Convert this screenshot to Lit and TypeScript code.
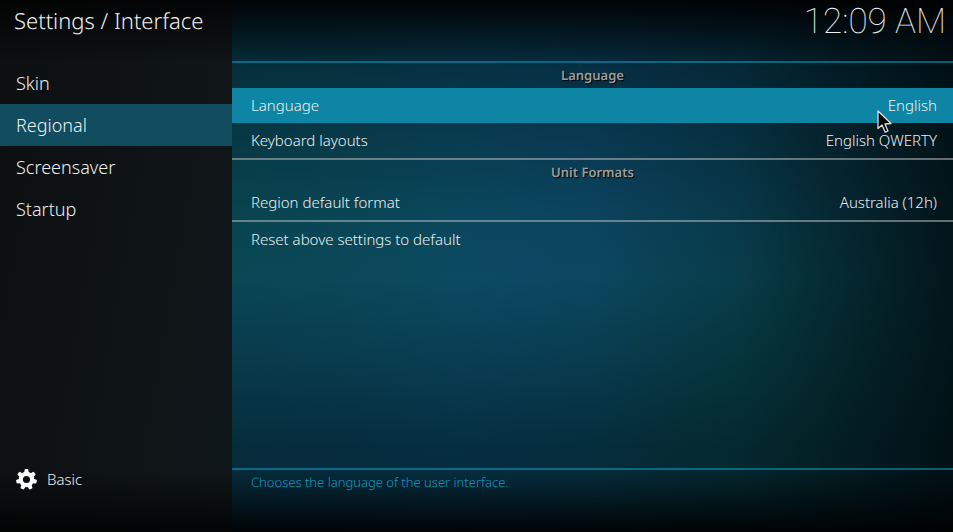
import { LitElement, html, svg, css, nothing } from "lit";
import { customElement, property, state } from "lit/decorators.js";
import { classMap } from "lit/directives/class-map.js";

interface Setting {
  label: string;
  value?: string;
}

interface Group {
  title?: string;
  settings: Setting[];
}

const CATEGORIES = ["Skin", "Regional", "Screensaver", "Startup"];

const GROUPS: Group[] = [
  {
    title: "Language",
    settings: [
      { label: "Language", value: "English" },
      { label: "Keyboard layouts", value: "English QWERTY" },
    ],
  },
  {
    title: "Unit Formats",
    settings: [{ label: "Region default format", value: "Australia (12h)" }],
  },
  { settings: [{ label: "Reset above settings to default" }] },
];

const GEAR_TEETH = 7;

@customElement("settings-sidebar")
export class SettingsSidebar extends LitElement {
  @state() private current = "Regional";

  static styles = css`
    :host {
      display: flex;
      flex-direction: column;
      background:
        linear-gradient(#000000d0, #00000000) top / 100% 62px no-repeat,
        linear-gradient(#00000000, #000000d0) bottom / 100% 62px no-repeat,
        linear-gradient(100deg, #0d0f10, #10171a);
    }
    .title {
      margin: 0;
      height: 62px;
      padding-left: 14px;
      font-size: 22px;
      font-weight: 300;
      line-height: 42px;
      white-space: nowrap;
      box-sizing: border-box;
    }
    .menu {
      display: flex;
      flex-direction: column;
    }
    .item,
    .level {
      border: 0;
      background: none;
      color: inherit;
      font: inherit;
      text-align: left;
      padding: 0 16px;
    }
    .item {
      height: 42px;
      font-size: 18px;
    }
    .current {
      background: #114d5e;
    }
    .level {
      display: flex;
      align-items: center;
      gap: 10px;
      height: 40px;
      margin-top: auto;
      margin-bottom: 33px;
      font-size: 15px;
    }
    .gear {
      width: 21px;
      height: 21px;
      fill: none;
      stroke: #fff;
    }
  `;

  render() {
    return html`
      <h1 class="title">Settings / Interface</h1>
      <nav class="menu" aria-label="Categories">
        ${CATEGORIES.map(
          (name) => html`<button
            class=${classMap({ item: true, current: name === this.current })}
            @click=${() => (this.current = name)}
          >
            ${name}
          </button>`,
        )}
      </nav>
      <button class="level">
        <svg class="gear" viewBox="-10 -10 20 20" aria-hidden="true">
          <circle r="5.4" stroke-width="4" />
          ${Array.from(
            { length: GEAR_TEETH },
            (_, i) => svg`<path
              d="M-1.3 -6.8L-1 -9.1H1L1.3 -6.8Z"
              stroke-width="1.6"
              stroke-linejoin="round"
              fill="#fff"
              transform="rotate(${(i * 360) / GEAR_TEETH})"
            />`,
          )}
        </svg>
        Basic
      </button>
    `;
  }
}

@customElement("settings-group")
export class SettingsGroup extends LitElement {
  @property({ attribute: false }) group: Group = { settings: [] };
  @property() focused = "";

  static styles = css`
    :host {
      display: block;
    }
    .heading {
      margin: 0;
      font-size: 13px;
      font-weight: 600;
      line-height: 25px;
      text-align: center;
      color: #a09c9a;
      text-shadow: 1px 1px 1px #000;
    }
    .row {
      display: flex;
      align-items: center;
      justify-content: space-between;
      gap: 20px;
      width: 100%;
      height: 35px;
      padding: 0 16px 1px 19px;
      border: 0;
      background: none;
      color: inherit;
      font: inherit;
      font-size: 15px;
      text-align: left;
    }
    .focused {
      background: #0f85a5;
    }
  `;

  render() {
    const { title, settings } = this.group;
    return html`
      ${title ? html`<h2 class="heading">${title}</h2>` : nothing}
      ${settings.map(
        (s) => html`<button
          class=${classMap({ row: true, focused: s.label === this.focused })}
        >
          <span>${s.label}</span>
          ${s.value ? html`<span>${s.value}</span>` : nothing}
        </button>`,
      )}
    `;
  }
}

@customElement("app-root")
export class AppRoot extends LitElement {
  static styles = css`
    :host {
      display: grid;
      grid-template-columns: 232px 1fr;
      position: relative;
      min-height: 100vh;
      color: #eceff0;
      font-family: "Noto Sans", sans-serif;
      font-weight: 300;
      text-rendering: geometricPrecision;
      background: #010d12;
    }
    .content {
      display: flex;
      flex-direction: column;
      min-width: 0;
      background:
        linear-gradient(#000000e8, #00000000) top / 100% 66px no-repeat,
        linear-gradient(#00000000, #000000e8) bottom / 100% 62px no-repeat,
        linear-gradient(90deg, #00080c00 50%, #00080c20 70%, #00080c70 86%, #00080cb8 100%),
        linear-gradient(#00101ca0 0%, #00101c70 14%, #00101c18 40%, #00101c08 52%, #00101c38 66%, #00101c80 84%, #00101c88 100%),
        radial-gradient(ellipse 42% 50% at 76% 86%, #055044a0, #05504400),
        radial-gradient(ellipse 40% 40% at 4% 86%, #0a466060, #0a466000),
        radial-gradient(ellipse 40% 80% at 0% 30%, #08484c90, #08484c00),
        linear-gradient(90deg, #0b4a5e, #0b4d66 30%, #0c4864 52%, #094355 75%, #063a44);
    }
    .top {
      display: flex;
      justify-content: flex-end;
      height: 61px;
      padding-right: 7px;
      box-sizing: border-box;
    }
    .clock {
      font-family: Roboto, sans-serif;
      font-size: 35px;
      font-weight: 100;
      line-height: 44px;
    }
    .list {
      flex: 1;
      border-top: 2px solid #0f8cafa0;
      border-bottom: 2px solid #0f8cafa0;
    }
    .divided {
      border-bottom: 2px solid #c8c4c480;
    }
    .help {
      margin: 0;
      height: 62px;
      padding: 2px 19px;
      box-sizing: border-box;
      color: #1798be;
      font-size: 13px;
      line-height: 20px;
    }
    .pointer {
      position: absolute;
      top: 109px;
      right: 61px;
      width: 16px;
      height: 25px;
      pointer-events: none;
    }
  `;

  render() {
    return html`
      <settings-sidebar></settings-sidebar>
      <main class="content">
        <header class="top"><time class="clock">12:09 AM</time></header>
        <section class="list">
          ${GROUPS.map(
            (group, i) => html`<settings-group
              class=${classMap({ divided: i < GROUPS.length - 1 })}
              .group=${group}
              focused=${i === 0 ? "Language" : ""}
            ></settings-group>`,
          )}
        </section>
        <p class="help">Chooses the language of the user interface.</p>
      </main>
      <svg class="pointer" viewBox="0 0 16 25" aria-hidden="true">
        <path
          d="M2 2V19.6L6 16L9.2 23.2L12 22L8.9 15L15 14.5Z"
          fill="#050505"
          stroke="#ddd"
          stroke-width="1.3"
          stroke-linejoin="round"
        />
      </svg>
    `;
  }
}
